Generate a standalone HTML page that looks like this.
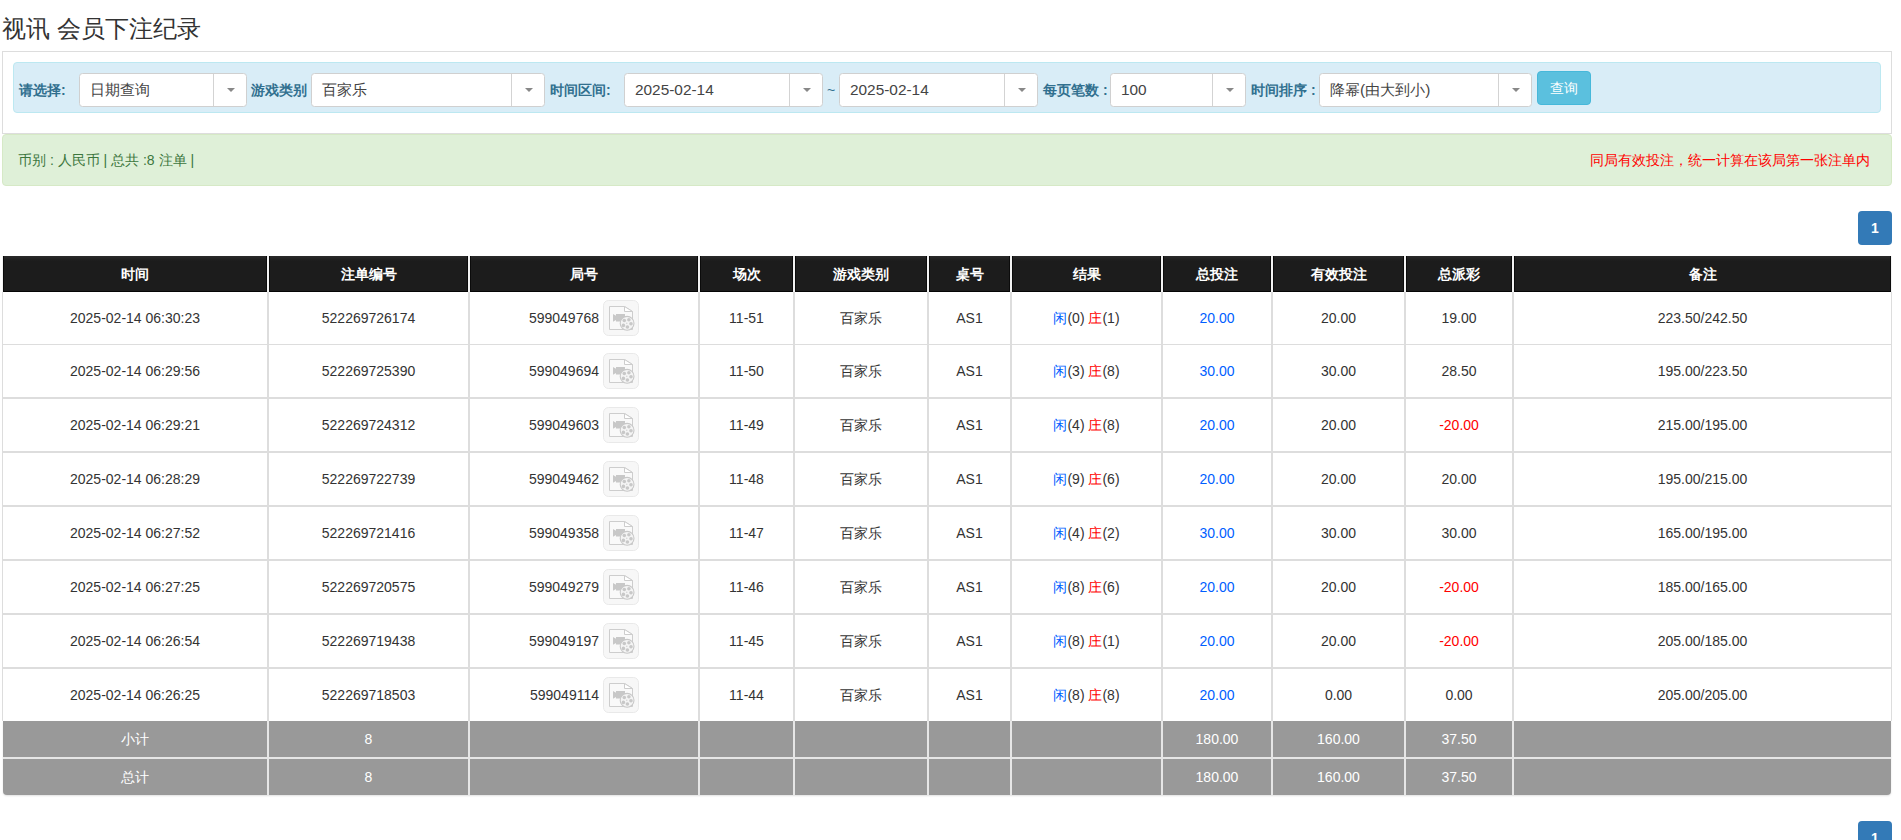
<!DOCTYPE html><html><head><meta charset="utf-8"><style>
html,body{margin:0;padding:0;background:#fff;width:1901px;height:840px;overflow:hidden;position:relative;font-family:"Liberation Sans", sans-serif;color:#333;}
.a{position:absolute;}
.t{position:absolute;white-space:nowrap;line-height:20px;}
.lbl{position:absolute;white-space:nowrap;font-weight:bold;font-size:14px;color:#31708f;line-height:20px;top:80px;}
.sel{position:absolute;top:73px;height:32px;border:1px solid #d0d0d0;border-radius:3.5px;background:#fff;box-sizing:content-box;}
.sel .v{position:absolute;left:10px;top:5.5px;font-size:15.4px;line-height:20px;color:#444;white-space:nowrap;}
.sel .d{position:absolute;top:0;bottom:0;width:1px;background:#d3d3d3;}
.sel .ar{position:absolute;top:14px;width:0;height:0;border-left:4px solid transparent;border-right:4px solid transparent;border-top:4px solid #888;}
.hd{position:absolute;top:256px;height:35px;background:linear-gradient(#2a2a2a 0,#1c1c1c 5px,#1c1c1c 100%);border-left:1px solid #0b0b0b;border-bottom:1px solid #050505;border-right:1px solid #0b0b0b;color:#fff;font-weight:bold;font-size:14px;text-align:center;line-height:37px;}
.c{position:absolute;text-align:center;font-size:14px;white-space:nowrap;}
.g{position:absolute;background:#999;color:#fff;font-size:14px;text-align:center;line-height:36px;}
.bl{color:#005eff} .rd{color:#f00}

</style></head><body>
<div class="t" style="left:2px;top:14px;font-size:24px;line-height:30px;color:#333;">视讯 会员下注纪录</div>
<div class="a" style="left:2px;top:51px;width:1888px;height:81px;border:1px solid #ddd;"></div>
<div class="a" style="left:13px;top:62px;width:1866px;height:49px;border:1px solid #bce8f1;background:#d9edf7;border-radius:4px;"></div>
<div class="lbl" style="left:19px;">请选择:</div>
<div class="lbl" style="left:251px;">游戏类别</div>
<div class="lbl" style="left:550px;">时间区间:</div>
<div class="lbl" style="left:1043px;">每页笔数 :</div>
<div class="lbl" style="left:1251px;">时间排序 :</div>
<div class="t" style="left:827px;top:80px;font-size:14px;color:#31708f;">~</div>
<div class="sel" style="left:79px;width:166px;"><div class="v">日期查询</div><div class="d" style="left:133px"></div><div class="ar" style="left:146.5px"></div></div>
<div class="sel" style="left:311px;width:232px;"><div class="v">百家乐</div><div class="d" style="left:199px"></div><div class="ar" style="left:212.5px"></div></div>
<div class="sel" style="left:624px;width:197px;"><div class="v">2025-02-14</div><div class="d" style="left:164px"></div><div class="ar" style="left:177.5px"></div></div>
<div class="sel" style="left:839px;width:197px;"><div class="v">2025-02-14</div><div class="d" style="left:164px"></div><div class="ar" style="left:177.5px"></div></div>
<div class="sel" style="left:1110px;width:134px;"><div class="v">100</div><div class="d" style="left:101px"></div><div class="ar" style="left:114.5px"></div></div>
<div class="sel" style="left:1319px;width:211px;"><div class="v">降幂(由大到小)</div><div class="d" style="left:178px"></div><div class="ar" style="left:191.5px"></div></div>
<div class="a" style="left:1537px;top:71px;width:52px;height:32px;border:1px solid #46b8da;background:#5bc0de;border-radius:4px;color:#fff;font-size:14px;line-height:32px;text-align:center;">查询</div>
<div class="a" style="left:2px;top:134px;width:1888px;height:50px;border:1px solid #d6e9c6;background:#dff0d8;border-radius:4px;"></div>
<div class="t" style="left:18px;top:150px;font-size:14px;color:#3c763d;">币别 : 人民币 | 总共 :8 注单 |</div>
<div class="t" style="right:31px;top:150px;font-size:14px;color:#f00;">同局有效投注，统一计算在该局第一张注单内</div>
<div class="a" style="left:1858px;top:211px;width:34px;height:34px;background:#337ab7;border-radius:4px;color:#fff;font-size:14px;font-weight:bold;line-height:34px;text-align:center;">1</div>
<div class="a" style="left:1858px;top:821px;width:34px;height:34px;background:#337ab7;border-radius:4px;color:#fff;font-size:14px;font-weight:bold;line-height:34px;text-align:center;">1</div>
<div class="a" style="left:2px;top:256px;width:1890px;height:36px;background:#f2f2f2;"></div>
<div class="hd" style="left:3px;width:262px;">时间</div>
<div class="hd" style="left:269px;width:197px;">注单编号</div>
<div class="hd" style="left:470px;width:226px;">局号</div>
<div class="hd" style="left:700px;width:91px;">场次</div>
<div class="hd" style="left:795px;width:130px;">游戏类别</div>
<div class="hd" style="left:929px;width:79px;">桌号</div>
<div class="hd" style="left:1012px;width:147px;">结果</div>
<div class="hd" style="left:1163px;width:106px;">总投注</div>
<div class="hd" style="left:1273px;width:129px;">有效投注</div>
<div class="hd" style="left:1406px;width:104px;">总派彩</div>
<div class="hd" style="left:1514px;width:375px;">备注</div>
<div class="a" style="left:2px;top:292px;width:1px;height:429px;background:#ddd;"></div>
<div class="a" style="left:1891px;top:292px;width:1px;height:429px;background:#ddd;"></div>
<div class="a" style="left:267px;top:292px;width:2px;height:429px;background:#ddd;"></div>
<div class="a" style="left:468px;top:292px;width:2px;height:429px;background:#ddd;"></div>
<div class="a" style="left:698px;top:292px;width:2px;height:429px;background:#ddd;"></div>
<div class="a" style="left:793px;top:292px;width:2px;height:429px;background:#ddd;"></div>
<div class="a" style="left:927px;top:292px;width:2px;height:429px;background:#ddd;"></div>
<div class="a" style="left:1010px;top:292px;width:2px;height:429px;background:#ddd;"></div>
<div class="a" style="left:1161px;top:292px;width:2px;height:429px;background:#ddd;"></div>
<div class="a" style="left:1271px;top:292px;width:2px;height:429px;background:#ddd;"></div>
<div class="a" style="left:1404px;top:292px;width:2px;height:429px;background:#ddd;"></div>
<div class="a" style="left:1512px;top:292px;width:2px;height:429px;background:#ddd;"></div>
<div class="a" style="left:2px;top:344px;width:1890px;height:1px;background:#ddd;"></div>
<div class="a" style="left:2px;top:397px;width:1890px;height:2px;background:#ddd;"></div>
<div class="a" style="left:2px;top:451px;width:1890px;height:2px;background:#ddd;"></div>
<div class="a" style="left:2px;top:505px;width:1890px;height:2px;background:#ddd;"></div>
<div class="a" style="left:2px;top:559px;width:1890px;height:2px;background:#ddd;"></div>
<div class="a" style="left:2px;top:613px;width:1890px;height:2px;background:#ddd;"></div>
<div class="a" style="left:2px;top:667px;width:1890px;height:2px;background:#ddd;"></div>
<div class="c" style="left:3px;width:264px;top:292px;height:52px;line-height:52px;">2025-02-14 06:30:23</div>
<div class="c" style="left:269px;width:199px;top:292px;height:52px;line-height:52px;">522269726174</div>
<div class="c" style="left:470px;width:129px;text-align:right;top:292px;height:52px;line-height:52px;">599049768</div>
<div class="a" style="left:603px;top:300px;width:36px;height:36px;"><svg width="36" height="36" viewBox="0 0 36 36" style="display:block">
<rect x="0.5" y="0.5" width="35" height="35" rx="5" fill="#f7f7f7" stroke="#e9e9e9"/>
<path d="M6.5 6.5 H21.5 L29.5 11.5 V29.5 H6.5 Z" fill="#f9f9f9" stroke="#cdcdcd"/>
<path d="M21.5 6.5 V11.5 H29.5 Z" fill="#fff" stroke="#cdcdcd" stroke-linejoin="round"/>
<path d="M10 14 L13 15.8 V14 H22 V21.6 H13 V20 L10 21.8 Z" fill="#c8c8c8"/>
<circle cx="24.1" cy="23.3" r="6.9" fill="#f4f4f4" stroke="#c8c8c8" stroke-width="1.1"/>
<circle cx="21.3" cy="20.5" r="1.8" fill="#c8c8c8"/>
<circle cx="25.9" cy="19.7" r="1.8" fill="#c8c8c8"/>
<circle cx="28.0" cy="23.8" r="1.8" fill="#c8c8c8"/>
<circle cx="24.4" cy="27.0" r="1.8" fill="#c8c8c8"/>
<circle cx="20.4" cy="25.4" r="1.8" fill="#c8c8c8"/>
<circle cx="23.8" cy="23.2" r="0.7" fill="#d0d0d0"/>
</svg></div>
<div class="c" style="left:700px;width:93px;top:292px;height:52px;line-height:52px;">11-51</div>
<div class="c" style="left:795px;width:132px;top:292px;height:52px;line-height:52px;">百家乐</div>
<div class="c" style="left:929px;width:81px;top:292px;height:52px;line-height:52px;">AS1</div>
<div class="c" style="left:1012px;width:149px;top:292px;height:52px;line-height:52px;"><span class="bl">闲</span>(0) <span class="rd">庄</span>(1)</div>
<div class="c bl" style="left:1163px;width:108px;top:292px;height:52px;line-height:52px;">20.00</div>
<div class="c" style="left:1273px;width:131px;top:292px;height:52px;line-height:52px;">20.00</div>
<div class="c " style="left:1406px;width:106px;top:292px;height:52px;line-height:52px;">19.00</div>
<div class="c" style="left:1514px;width:377px;top:292px;height:52px;line-height:52px;">223.50/242.50</div>
<div class="c" style="left:3px;width:264px;top:345px;height:52px;line-height:52px;">2025-02-14 06:29:56</div>
<div class="c" style="left:269px;width:199px;top:345px;height:52px;line-height:52px;">522269725390</div>
<div class="c" style="left:470px;width:129px;text-align:right;top:345px;height:52px;line-height:52px;">599049694</div>
<div class="a" style="left:603px;top:353px;width:36px;height:36px;"><svg width="36" height="36" viewBox="0 0 36 36" style="display:block">
<rect x="0.5" y="0.5" width="35" height="35" rx="5" fill="#f7f7f7" stroke="#e9e9e9"/>
<path d="M6.5 6.5 H21.5 L29.5 11.5 V29.5 H6.5 Z" fill="#f9f9f9" stroke="#cdcdcd"/>
<path d="M21.5 6.5 V11.5 H29.5 Z" fill="#fff" stroke="#cdcdcd" stroke-linejoin="round"/>
<path d="M10 14 L13 15.8 V14 H22 V21.6 H13 V20 L10 21.8 Z" fill="#c8c8c8"/>
<circle cx="24.1" cy="23.3" r="6.9" fill="#f4f4f4" stroke="#c8c8c8" stroke-width="1.1"/>
<circle cx="21.3" cy="20.5" r="1.8" fill="#c8c8c8"/>
<circle cx="25.9" cy="19.7" r="1.8" fill="#c8c8c8"/>
<circle cx="28.0" cy="23.8" r="1.8" fill="#c8c8c8"/>
<circle cx="24.4" cy="27.0" r="1.8" fill="#c8c8c8"/>
<circle cx="20.4" cy="25.4" r="1.8" fill="#c8c8c8"/>
<circle cx="23.8" cy="23.2" r="0.7" fill="#d0d0d0"/>
</svg></div>
<div class="c" style="left:700px;width:93px;top:345px;height:52px;line-height:52px;">11-50</div>
<div class="c" style="left:795px;width:132px;top:345px;height:52px;line-height:52px;">百家乐</div>
<div class="c" style="left:929px;width:81px;top:345px;height:52px;line-height:52px;">AS1</div>
<div class="c" style="left:1012px;width:149px;top:345px;height:52px;line-height:52px;"><span class="bl">闲</span>(3) <span class="rd">庄</span>(8)</div>
<div class="c bl" style="left:1163px;width:108px;top:345px;height:52px;line-height:52px;">30.00</div>
<div class="c" style="left:1273px;width:131px;top:345px;height:52px;line-height:52px;">30.00</div>
<div class="c " style="left:1406px;width:106px;top:345px;height:52px;line-height:52px;">28.50</div>
<div class="c" style="left:1514px;width:377px;top:345px;height:52px;line-height:52px;">195.00/223.50</div>
<div class="c" style="left:3px;width:264px;top:399px;height:52px;line-height:52px;">2025-02-14 06:29:21</div>
<div class="c" style="left:269px;width:199px;top:399px;height:52px;line-height:52px;">522269724312</div>
<div class="c" style="left:470px;width:129px;text-align:right;top:399px;height:52px;line-height:52px;">599049603</div>
<div class="a" style="left:603px;top:407px;width:36px;height:36px;"><svg width="36" height="36" viewBox="0 0 36 36" style="display:block">
<rect x="0.5" y="0.5" width="35" height="35" rx="5" fill="#f7f7f7" stroke="#e9e9e9"/>
<path d="M6.5 6.5 H21.5 L29.5 11.5 V29.5 H6.5 Z" fill="#f9f9f9" stroke="#cdcdcd"/>
<path d="M21.5 6.5 V11.5 H29.5 Z" fill="#fff" stroke="#cdcdcd" stroke-linejoin="round"/>
<path d="M10 14 L13 15.8 V14 H22 V21.6 H13 V20 L10 21.8 Z" fill="#c8c8c8"/>
<circle cx="24.1" cy="23.3" r="6.9" fill="#f4f4f4" stroke="#c8c8c8" stroke-width="1.1"/>
<circle cx="21.3" cy="20.5" r="1.8" fill="#c8c8c8"/>
<circle cx="25.9" cy="19.7" r="1.8" fill="#c8c8c8"/>
<circle cx="28.0" cy="23.8" r="1.8" fill="#c8c8c8"/>
<circle cx="24.4" cy="27.0" r="1.8" fill="#c8c8c8"/>
<circle cx="20.4" cy="25.4" r="1.8" fill="#c8c8c8"/>
<circle cx="23.8" cy="23.2" r="0.7" fill="#d0d0d0"/>
</svg></div>
<div class="c" style="left:700px;width:93px;top:399px;height:52px;line-height:52px;">11-49</div>
<div class="c" style="left:795px;width:132px;top:399px;height:52px;line-height:52px;">百家乐</div>
<div class="c" style="left:929px;width:81px;top:399px;height:52px;line-height:52px;">AS1</div>
<div class="c" style="left:1012px;width:149px;top:399px;height:52px;line-height:52px;"><span class="bl">闲</span>(4) <span class="rd">庄</span>(8)</div>
<div class="c bl" style="left:1163px;width:108px;top:399px;height:52px;line-height:52px;">20.00</div>
<div class="c" style="left:1273px;width:131px;top:399px;height:52px;line-height:52px;">20.00</div>
<div class="c rd" style="left:1406px;width:106px;top:399px;height:52px;line-height:52px;">-20.00</div>
<div class="c" style="left:1514px;width:377px;top:399px;height:52px;line-height:52px;">215.00/195.00</div>
<div class="c" style="left:3px;width:264px;top:453px;height:52px;line-height:52px;">2025-02-14 06:28:29</div>
<div class="c" style="left:269px;width:199px;top:453px;height:52px;line-height:52px;">522269722739</div>
<div class="c" style="left:470px;width:129px;text-align:right;top:453px;height:52px;line-height:52px;">599049462</div>
<div class="a" style="left:603px;top:461px;width:36px;height:36px;"><svg width="36" height="36" viewBox="0 0 36 36" style="display:block">
<rect x="0.5" y="0.5" width="35" height="35" rx="5" fill="#f7f7f7" stroke="#e9e9e9"/>
<path d="M6.5 6.5 H21.5 L29.5 11.5 V29.5 H6.5 Z" fill="#f9f9f9" stroke="#cdcdcd"/>
<path d="M21.5 6.5 V11.5 H29.5 Z" fill="#fff" stroke="#cdcdcd" stroke-linejoin="round"/>
<path d="M10 14 L13 15.8 V14 H22 V21.6 H13 V20 L10 21.8 Z" fill="#c8c8c8"/>
<circle cx="24.1" cy="23.3" r="6.9" fill="#f4f4f4" stroke="#c8c8c8" stroke-width="1.1"/>
<circle cx="21.3" cy="20.5" r="1.8" fill="#c8c8c8"/>
<circle cx="25.9" cy="19.7" r="1.8" fill="#c8c8c8"/>
<circle cx="28.0" cy="23.8" r="1.8" fill="#c8c8c8"/>
<circle cx="24.4" cy="27.0" r="1.8" fill="#c8c8c8"/>
<circle cx="20.4" cy="25.4" r="1.8" fill="#c8c8c8"/>
<circle cx="23.8" cy="23.2" r="0.7" fill="#d0d0d0"/>
</svg></div>
<div class="c" style="left:700px;width:93px;top:453px;height:52px;line-height:52px;">11-48</div>
<div class="c" style="left:795px;width:132px;top:453px;height:52px;line-height:52px;">百家乐</div>
<div class="c" style="left:929px;width:81px;top:453px;height:52px;line-height:52px;">AS1</div>
<div class="c" style="left:1012px;width:149px;top:453px;height:52px;line-height:52px;"><span class="bl">闲</span>(9) <span class="rd">庄</span>(6)</div>
<div class="c bl" style="left:1163px;width:108px;top:453px;height:52px;line-height:52px;">20.00</div>
<div class="c" style="left:1273px;width:131px;top:453px;height:52px;line-height:52px;">20.00</div>
<div class="c " style="left:1406px;width:106px;top:453px;height:52px;line-height:52px;">20.00</div>
<div class="c" style="left:1514px;width:377px;top:453px;height:52px;line-height:52px;">195.00/215.00</div>
<div class="c" style="left:3px;width:264px;top:507px;height:52px;line-height:52px;">2025-02-14 06:27:52</div>
<div class="c" style="left:269px;width:199px;top:507px;height:52px;line-height:52px;">522269721416</div>
<div class="c" style="left:470px;width:129px;text-align:right;top:507px;height:52px;line-height:52px;">599049358</div>
<div class="a" style="left:603px;top:515px;width:36px;height:36px;"><svg width="36" height="36" viewBox="0 0 36 36" style="display:block">
<rect x="0.5" y="0.5" width="35" height="35" rx="5" fill="#f7f7f7" stroke="#e9e9e9"/>
<path d="M6.5 6.5 H21.5 L29.5 11.5 V29.5 H6.5 Z" fill="#f9f9f9" stroke="#cdcdcd"/>
<path d="M21.5 6.5 V11.5 H29.5 Z" fill="#fff" stroke="#cdcdcd" stroke-linejoin="round"/>
<path d="M10 14 L13 15.8 V14 H22 V21.6 H13 V20 L10 21.8 Z" fill="#c8c8c8"/>
<circle cx="24.1" cy="23.3" r="6.9" fill="#f4f4f4" stroke="#c8c8c8" stroke-width="1.1"/>
<circle cx="21.3" cy="20.5" r="1.8" fill="#c8c8c8"/>
<circle cx="25.9" cy="19.7" r="1.8" fill="#c8c8c8"/>
<circle cx="28.0" cy="23.8" r="1.8" fill="#c8c8c8"/>
<circle cx="24.4" cy="27.0" r="1.8" fill="#c8c8c8"/>
<circle cx="20.4" cy="25.4" r="1.8" fill="#c8c8c8"/>
<circle cx="23.8" cy="23.2" r="0.7" fill="#d0d0d0"/>
</svg></div>
<div class="c" style="left:700px;width:93px;top:507px;height:52px;line-height:52px;">11-47</div>
<div class="c" style="left:795px;width:132px;top:507px;height:52px;line-height:52px;">百家乐</div>
<div class="c" style="left:929px;width:81px;top:507px;height:52px;line-height:52px;">AS1</div>
<div class="c" style="left:1012px;width:149px;top:507px;height:52px;line-height:52px;"><span class="bl">闲</span>(4) <span class="rd">庄</span>(2)</div>
<div class="c bl" style="left:1163px;width:108px;top:507px;height:52px;line-height:52px;">30.00</div>
<div class="c" style="left:1273px;width:131px;top:507px;height:52px;line-height:52px;">30.00</div>
<div class="c " style="left:1406px;width:106px;top:507px;height:52px;line-height:52px;">30.00</div>
<div class="c" style="left:1514px;width:377px;top:507px;height:52px;line-height:52px;">165.00/195.00</div>
<div class="c" style="left:3px;width:264px;top:561px;height:52px;line-height:52px;">2025-02-14 06:27:25</div>
<div class="c" style="left:269px;width:199px;top:561px;height:52px;line-height:52px;">522269720575</div>
<div class="c" style="left:470px;width:129px;text-align:right;top:561px;height:52px;line-height:52px;">599049279</div>
<div class="a" style="left:603px;top:569px;width:36px;height:36px;"><svg width="36" height="36" viewBox="0 0 36 36" style="display:block">
<rect x="0.5" y="0.5" width="35" height="35" rx="5" fill="#f7f7f7" stroke="#e9e9e9"/>
<path d="M6.5 6.5 H21.5 L29.5 11.5 V29.5 H6.5 Z" fill="#f9f9f9" stroke="#cdcdcd"/>
<path d="M21.5 6.5 V11.5 H29.5 Z" fill="#fff" stroke="#cdcdcd" stroke-linejoin="round"/>
<path d="M10 14 L13 15.8 V14 H22 V21.6 H13 V20 L10 21.8 Z" fill="#c8c8c8"/>
<circle cx="24.1" cy="23.3" r="6.9" fill="#f4f4f4" stroke="#c8c8c8" stroke-width="1.1"/>
<circle cx="21.3" cy="20.5" r="1.8" fill="#c8c8c8"/>
<circle cx="25.9" cy="19.7" r="1.8" fill="#c8c8c8"/>
<circle cx="28.0" cy="23.8" r="1.8" fill="#c8c8c8"/>
<circle cx="24.4" cy="27.0" r="1.8" fill="#c8c8c8"/>
<circle cx="20.4" cy="25.4" r="1.8" fill="#c8c8c8"/>
<circle cx="23.8" cy="23.2" r="0.7" fill="#d0d0d0"/>
</svg></div>
<div class="c" style="left:700px;width:93px;top:561px;height:52px;line-height:52px;">11-46</div>
<div class="c" style="left:795px;width:132px;top:561px;height:52px;line-height:52px;">百家乐</div>
<div class="c" style="left:929px;width:81px;top:561px;height:52px;line-height:52px;">AS1</div>
<div class="c" style="left:1012px;width:149px;top:561px;height:52px;line-height:52px;"><span class="bl">闲</span>(8) <span class="rd">庄</span>(6)</div>
<div class="c bl" style="left:1163px;width:108px;top:561px;height:52px;line-height:52px;">20.00</div>
<div class="c" style="left:1273px;width:131px;top:561px;height:52px;line-height:52px;">20.00</div>
<div class="c rd" style="left:1406px;width:106px;top:561px;height:52px;line-height:52px;">-20.00</div>
<div class="c" style="left:1514px;width:377px;top:561px;height:52px;line-height:52px;">185.00/165.00</div>
<div class="c" style="left:3px;width:264px;top:615px;height:52px;line-height:52px;">2025-02-14 06:26:54</div>
<div class="c" style="left:269px;width:199px;top:615px;height:52px;line-height:52px;">522269719438</div>
<div class="c" style="left:470px;width:129px;text-align:right;top:615px;height:52px;line-height:52px;">599049197</div>
<div class="a" style="left:603px;top:623px;width:36px;height:36px;"><svg width="36" height="36" viewBox="0 0 36 36" style="display:block">
<rect x="0.5" y="0.5" width="35" height="35" rx="5" fill="#f7f7f7" stroke="#e9e9e9"/>
<path d="M6.5 6.5 H21.5 L29.5 11.5 V29.5 H6.5 Z" fill="#f9f9f9" stroke="#cdcdcd"/>
<path d="M21.5 6.5 V11.5 H29.5 Z" fill="#fff" stroke="#cdcdcd" stroke-linejoin="round"/>
<path d="M10 14 L13 15.8 V14 H22 V21.6 H13 V20 L10 21.8 Z" fill="#c8c8c8"/>
<circle cx="24.1" cy="23.3" r="6.9" fill="#f4f4f4" stroke="#c8c8c8" stroke-width="1.1"/>
<circle cx="21.3" cy="20.5" r="1.8" fill="#c8c8c8"/>
<circle cx="25.9" cy="19.7" r="1.8" fill="#c8c8c8"/>
<circle cx="28.0" cy="23.8" r="1.8" fill="#c8c8c8"/>
<circle cx="24.4" cy="27.0" r="1.8" fill="#c8c8c8"/>
<circle cx="20.4" cy="25.4" r="1.8" fill="#c8c8c8"/>
<circle cx="23.8" cy="23.2" r="0.7" fill="#d0d0d0"/>
</svg></div>
<div class="c" style="left:700px;width:93px;top:615px;height:52px;line-height:52px;">11-45</div>
<div class="c" style="left:795px;width:132px;top:615px;height:52px;line-height:52px;">百家乐</div>
<div class="c" style="left:929px;width:81px;top:615px;height:52px;line-height:52px;">AS1</div>
<div class="c" style="left:1012px;width:149px;top:615px;height:52px;line-height:52px;"><span class="bl">闲</span>(8) <span class="rd">庄</span>(1)</div>
<div class="c bl" style="left:1163px;width:108px;top:615px;height:52px;line-height:52px;">20.00</div>
<div class="c" style="left:1273px;width:131px;top:615px;height:52px;line-height:52px;">20.00</div>
<div class="c rd" style="left:1406px;width:106px;top:615px;height:52px;line-height:52px;">-20.00</div>
<div class="c" style="left:1514px;width:377px;top:615px;height:52px;line-height:52px;">205.00/185.00</div>
<div class="c" style="left:3px;width:264px;top:669px;height:52px;line-height:52px;">2025-02-14 06:26:25</div>
<div class="c" style="left:269px;width:199px;top:669px;height:52px;line-height:52px;">522269718503</div>
<div class="c" style="left:470px;width:129px;text-align:right;top:669px;height:52px;line-height:52px;">599049114</div>
<div class="a" style="left:603px;top:677px;width:36px;height:36px;"><svg width="36" height="36" viewBox="0 0 36 36" style="display:block">
<rect x="0.5" y="0.5" width="35" height="35" rx="5" fill="#f7f7f7" stroke="#e9e9e9"/>
<path d="M6.5 6.5 H21.5 L29.5 11.5 V29.5 H6.5 Z" fill="#f9f9f9" stroke="#cdcdcd"/>
<path d="M21.5 6.5 V11.5 H29.5 Z" fill="#fff" stroke="#cdcdcd" stroke-linejoin="round"/>
<path d="M10 14 L13 15.8 V14 H22 V21.6 H13 V20 L10 21.8 Z" fill="#c8c8c8"/>
<circle cx="24.1" cy="23.3" r="6.9" fill="#f4f4f4" stroke="#c8c8c8" stroke-width="1.1"/>
<circle cx="21.3" cy="20.5" r="1.8" fill="#c8c8c8"/>
<circle cx="25.9" cy="19.7" r="1.8" fill="#c8c8c8"/>
<circle cx="28.0" cy="23.8" r="1.8" fill="#c8c8c8"/>
<circle cx="24.4" cy="27.0" r="1.8" fill="#c8c8c8"/>
<circle cx="20.4" cy="25.4" r="1.8" fill="#c8c8c8"/>
<circle cx="23.8" cy="23.2" r="0.7" fill="#d0d0d0"/>
</svg></div>
<div class="c" style="left:700px;width:93px;top:669px;height:52px;line-height:52px;">11-44</div>
<div class="c" style="left:795px;width:132px;top:669px;height:52px;line-height:52px;">百家乐</div>
<div class="c" style="left:929px;width:81px;top:669px;height:52px;line-height:52px;">AS1</div>
<div class="c" style="left:1012px;width:149px;top:669px;height:52px;line-height:52px;"><span class="bl">闲</span>(8) <span class="rd">庄</span>(8)</div>
<div class="c bl" style="left:1163px;width:108px;top:669px;height:52px;line-height:52px;">20.00</div>
<div class="c" style="left:1273px;width:131px;top:669px;height:52px;line-height:52px;">0.00</div>
<div class="c " style="left:1406px;width:106px;top:669px;height:52px;line-height:52px;">0.00</div>
<div class="c" style="left:1514px;width:377px;top:669px;height:52px;line-height:52px;">205.00/205.00</div>
<div class="a" style="left:3px;top:721px;width:1888px;height:74px;background:#e6e6e6;border-radius:0 0 4px 4px;box-shadow:0 1px 2px rgba(0,0,0,0.12);"></div>
<div class="g" style="left:3px;width:264px;top:721px;height:36px;">小计</div>
<div class="g" style="left:269px;width:199px;top:721px;height:36px;">8</div>
<div class="g" style="left:470px;width:228px;top:721px;height:36px;"></div>
<div class="g" style="left:700px;width:93px;top:721px;height:36px;"></div>
<div class="g" style="left:795px;width:132px;top:721px;height:36px;"></div>
<div class="g" style="left:929px;width:81px;top:721px;height:36px;"></div>
<div class="g" style="left:1012px;width:149px;top:721px;height:36px;"></div>
<div class="g" style="left:1163px;width:108px;top:721px;height:36px;">180.00</div>
<div class="g" style="left:1273px;width:131px;top:721px;height:36px;">160.00</div>
<div class="g" style="left:1406px;width:106px;top:721px;height:36px;">37.50</div>
<div class="g" style="left:1514px;width:377px;top:721px;height:36px;"></div>
<div class="g" style="left:3px;width:264px;top:759px;height:36px;border-bottom-left-radius:4px;">总计</div>
<div class="g" style="left:269px;width:199px;top:759px;height:36px;">8</div>
<div class="g" style="left:470px;width:228px;top:759px;height:36px;"></div>
<div class="g" style="left:700px;width:93px;top:759px;height:36px;"></div>
<div class="g" style="left:795px;width:132px;top:759px;height:36px;"></div>
<div class="g" style="left:929px;width:81px;top:759px;height:36px;"></div>
<div class="g" style="left:1012px;width:149px;top:759px;height:36px;"></div>
<div class="g" style="left:1163px;width:108px;top:759px;height:36px;">180.00</div>
<div class="g" style="left:1273px;width:131px;top:759px;height:36px;">160.00</div>
<div class="g" style="left:1406px;width:106px;top:759px;height:36px;">37.50</div>
<div class="g" style="left:1514px;width:377px;top:759px;height:36px;border-bottom-right-radius:4px;"></div>
</body></html>
